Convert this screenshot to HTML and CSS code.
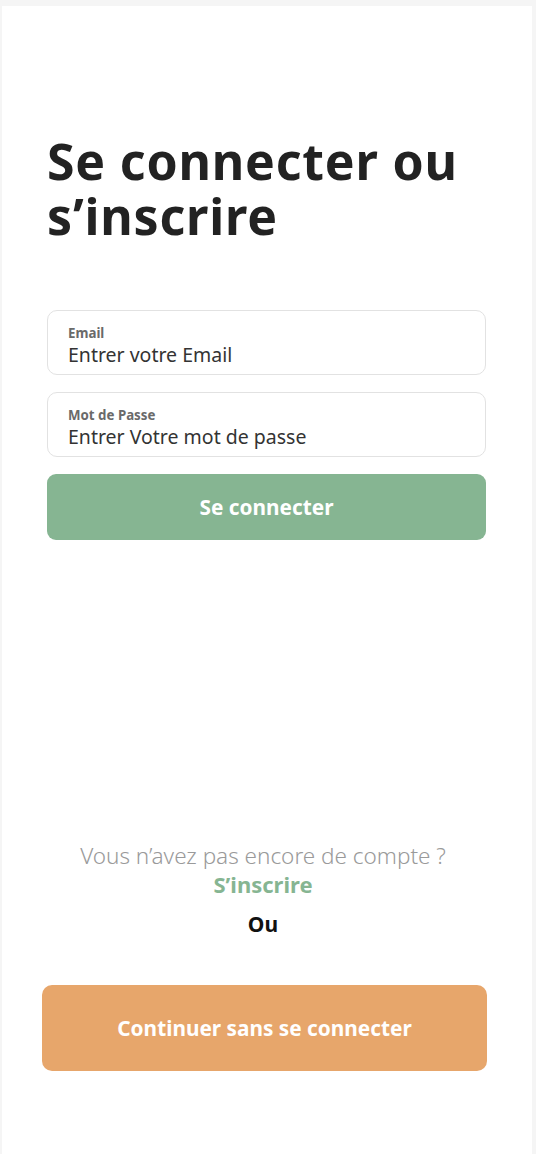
FILE: index.html
```html
<!DOCTYPE html>
<html lang="fr">
<head>
<meta charset="utf-8">
<link rel="stylesheet" href="styles.css">
<title>Connexion</title>
</head>
<body>
<main class="card">
  <h1 class="title">Se connecter ou s’inscrire</h1>
  <form class="form">
    <label class="field">
      <span class="field-label">Email</span>
      <span class="field-value">Entrer votre Email</span>
    </label>
    <label class="field">
      <span class="field-label">Mot de Passe</span>
      <span class="field-value">Entrer Votre mot de passe</span>
    </label>
    <button type="button" class="btn btn-green">Se connecter</button>
  </form>
  <div class="bottom">
    <p class="question">Vous n’avez pas encore de compte ?</p>
    <a class="signup">S’inscrire</a>
    <p class="or">Ou</p>
    <button type="button" class="btn btn-orange">Continuer sans se connecter</button>
  </div>
</main>
</body>
</html>
```
FILE: styles.css
```css
html, body {
  margin: 0;
  padding: 0;
  background: #f5f5f5;
}
body {
  font-family: "Noto Sans", "Open Sans", sans-serif;
  color: #222;
}
.card {
  background: #fff;
  margin: 6px 4px 0 2px;
  min-height: 1148px;
  box-sizing: border-box;
  padding: 128px 46px 0 45px;
  display: flex;
  flex-direction: column;
}
.title {
  margin: 0;
  font-size: 50px;
  line-height: 55px;
  font-weight: 700;
  color: #222;
  letter-spacing: 0.8px;
  width: 440px;
}
.form {
  margin-top: 66px;
  display: flex;
  flex-direction: column;
  gap: 17px;
}
.field {
  display: flex;
  flex-direction: column;
  border: 1.5px solid #e2e2e2;
  border-radius: 10px;
  height: 65px;
  box-sizing: border-box;
  padding: 14px 20px 0;
}
.field-label {
  font-size: 13.3px;
  font-weight: 700;
  color: #6a6a6a;
  line-height: 16px;
}
.field-value {
  font-size: 19.5px;
  line-height: 26px;
  color: #333;
  margin-top: 1px;
}
.btn {
  border: none;
  font-family: inherit;
  font-weight: 700;
  color: #fff;
  font-size: 20.8px;
  cursor: pointer;
}
.btn-green {
  background: #86b592;
  height: 66px;
  border-radius: 9px;
}
.bottom {
  margin-top: 302px;
  padding-right: 7px;
  display: flex;
  flex-direction: column;
  align-items: center;
}
.question {
  margin: 0;
  font-size: 22.5px;
  line-height: 28px;
  font-weight: 300;
  color: #9a9a9a;
}
.signup {
  font-size: 22px;
  line-height: 28px;
  font-weight: 700;
  color: #86b592;
}
.or {
  margin: 13px 0 0;
  font-size: 21px;
  line-height: 26px;
  font-weight: 700;
  color: #111;
}
.btn-orange {
  align-self: stretch;
  margin: 48px -8px 0 -5px;
  background: #e7a66b;
  height: 86px;
  border-radius: 10px;
}
```
